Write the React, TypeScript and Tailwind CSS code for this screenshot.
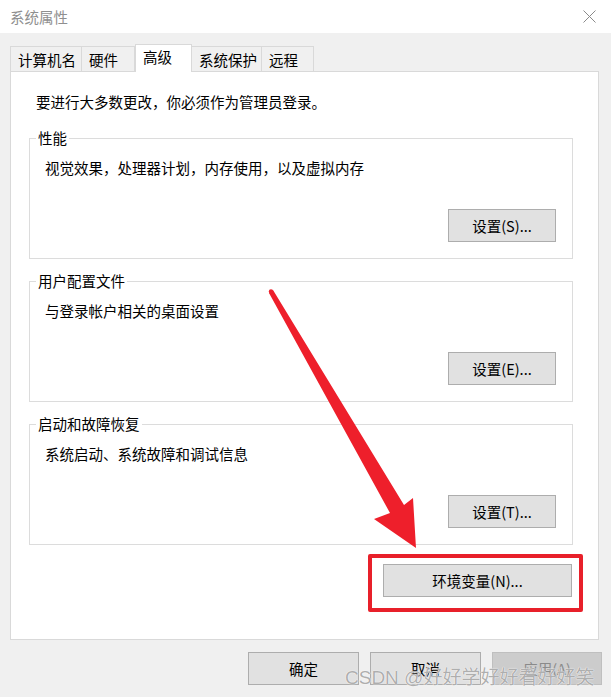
import React from "react"

const font = { fontFamily: '"Noto Sans CJK SC", "Microsoft YaHei", sans-serif' }

function Group({ title, desc, btn }: { title: string; desc: string; btn: string }) {
    return (
        <div className="relative h-[121px] border border-[#dcdcdc] flex flex-col">
            <span className="absolute -top-[11px] left-[6px] px-[2px] bg-white leading-[20px]">{title}</span>
            <p className="pl-[15px] pt-[19px] leading-[20px]">{desc}</p>
            <button className="mt-auto self-end mr-[16px] mb-[16px] w-[108px] h-[33px] bg-[#e1e1e1] border border-[#adadad] leading-[20px]">
                {btn}
            </button>
        </div>
    )
}

export default function App() {
    const tabs = ["计算机名", "硬件", "高级", "系统保护", "远程"]
    const widths = ["w-[72px]", "w-[53px]", "w-[57px]", "w-[70px]", "w-[52px]"]

    return (
        <div className="relative w-[611px] h-[697px] bg-[#f0f0f0] text-[14.5px] text-black overflow-hidden" style={font}>
            {/* title bar */}
            <div className="h-[33px] bg-white flex items-center justify-between pl-[10px] pr-[15px]">
                <span className="text-[#8f8f8f]">系统属性</span>
                <svg width="13" height="13" viewBox="0 0 13 13">
                    <path d="M0.5 0.5 L12.5 12.5 M12.5 0.5 L0.5 12.5" stroke="#8a8a8a" strokeWidth="1" />
                </svg>
            </div>

            {/* tabs */}
            <div className="flex items-end pl-[10px] mt-[11px] h-[27px]">
                {tabs.map((t, i) =>
                    i === 2 ? (
                        <div key={t} className={`${widths[i]} h-[28px] -mb-px bg-white border border-[#d9d9d9] border-b-0 pl-[7px] pt-[2px] leading-[20px] relative z-10`}>
                            {t}
                        </div>
                    ) : (
                        <div key={t} className={`${widths[i]} h-[25px] bg-[#f0f0f0] border border-[#d9d9d9] border-b-0 ${i === 0 ? "" : "border-l-0"} pl-[7px] pt-[3px] leading-[20px]`}>
                            {t}
                        </div>
                    )
                )}
            </div>

            {/* panel */}
            <div className="ml-[10px] mr-[12px] h-[569px] bg-white border border-[#d9d9d9] flex flex-col">
                <p className="pl-[25px] pt-[20px] leading-[20px]">要进行大多数更改，你必须作为管理员登录。</p>
                <div className="ml-[18px] mr-[25px] mt-[26px] flex flex-col gap-[22px]">
                    <Group title="性能" desc="视觉效果，处理器计划，内存使用，以及虚拟内存" btn="设置(S)..." />
                    <Group title="用户配置文件" desc="与登录帐户相关的桌面设置" btn="设置(E)..." />
                    <Group title="启动和故障恢复" desc="系统启动、系统故障和调试信息" btn="设置(T)..." />
                </div>
                <button className="self-end mr-[26px] mt-[19px] w-[189px] h-[33px] bg-[#e1e1e1] border border-[#adadad] leading-[20px]">
                    环境变量(N)...
                </button>
            </div>

            {/* bottom buttons */}
            <div className="flex justify-end gap-[11px] mt-[12px] pr-[9px]">
                <button className="w-[111px] h-[33px] bg-[#e1e1e1] border border-[#adadad]">确定</button>
                <button className="w-[111px] h-[33px] bg-[#e1e1e1] border border-[#adadad]">取消</button>
                <button className="w-[110px] h-[33px] bg-[#cccccc] border border-[#bfbfbf] text-[#8a8a8a]">应用(A)</button>
            </div>

            {/* annotation: red frame */}
            <div className="absolute left-[368px] top-[554px] w-[215px] h-[58px] border-4 border-[#e8202a] rounded-[2px] pointer-events-none" />

            {/* annotation: arrow */}
            <svg className="absolute left-0 top-0 pointer-events-none" width="611" height="697" viewBox="0 0 611 697">
                <polygon points="269,293 273,290 404,505 413,498 416,548 374,519 390,513" fill="#ee1f2b" />
                <circle cx="271" cy="291.5" r="2.2" fill="#ee1f2b" />
            </svg>

            {/* watermark */}
            <div
                className="absolute left-[345px] top-[665px] text-[19px] leading-[26px] text-[rgba(160,160,160,0.85)] pointer-events-none whitespace-nowrap"
                style={{ fontFamily: '"Liberation Sans", "Noto Sans CJK SC", sans-serif', textShadow: "0 0 1px #fff, 0 0 1px #fff" }}
            >
                CSDN @好好学好好看好好笑
            </div>
        </div>
    )
}
